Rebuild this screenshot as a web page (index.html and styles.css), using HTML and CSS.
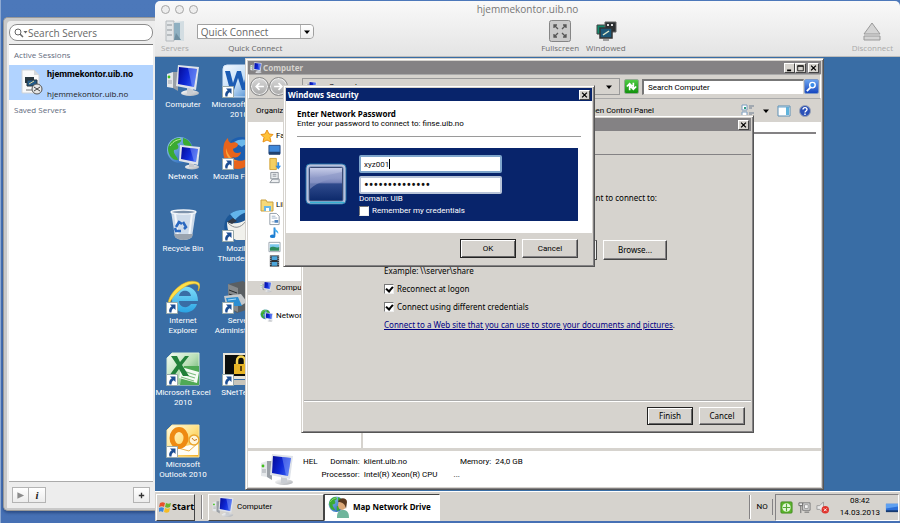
FILE: index.html
```html
<!DOCTYPE html>
<html lang="en">
<head>
<meta charset="utf-8">
<title>hjemmekontor.uib.no</title>
<link rel="stylesheet" href="styles.css">
</head>
<body>
<svg class="defs" aria-hidden="true">
  <defs>
    <linearGradient id="screen" x1="0" y1=".3" x2="1" y2=".7"><stop offset="0" stop-color="#060fa0"/><stop offset=".5" stop-color="#0f2ad8"/><stop offset="1" stop-color="#3a62f4"/></linearGradient>
    <linearGradient id="globe" x1="0" y1="0" x2="1" y2="1"><stop offset="0" stop-color="#9fd4f4"/><stop offset="1" stop-color="#1454b0"/></linearGradient>
    <linearGradient id="silver" x1="0" y1="0" x2="1" y2="1"><stop offset="0" stop-color="#fff"/><stop offset="1" stop-color="#a9adb3"/></linearGradient>
    <linearGradient id="excel" x1="0" y1="0" x2="1" y2="1"><stop offset="0" stop-color="#f6fcf4"/><stop offset=".5" stop-color="#b9dfb6"/><stop offset="1" stop-color="#3f9c4c"/></linearGradient>
    <linearGradient id="outlook" x1="0" y1="0" x2="1" y2="1"><stop offset="0" stop-color="#fffbe4"/><stop offset=".5" stop-color="#ffe184"/><stop offset="1" stop-color="#f2a91c"/></linearGradient>
    <linearGradient id="word" x1="0" y1="0" x2="1" y2="1"><stop offset="0" stop-color="#f4f9ff"/><stop offset=".5" stop-color="#c4def7"/><stop offset="1" stop-color="#2f78c8"/></linearGradient>
    <linearGradient id="ie" x1="0" y1="0" x2="0" y2="1"><stop offset="0" stop-color="#7fdcf8"/><stop offset="1" stop-color="#2aa4e4"/></linearGradient>
    <linearGradient id="tile" x1="0" y1="0" x2="0" y2="1"><stop offset="0" stop-color="#c9cfea"/><stop offset=".45" stop-color="#7784ba"/><stop offset=".5" stop-color="#2f4a8c"/><stop offset="1" stop-color="#0d2a6c"/></linearGradient>
    <symbol id="i-computer" viewBox="0 0 34 34">
      <path d="M1 10l6-2v16l-6-1z" fill="#e4e7ea"/><path d="M7 8l5 0v19l-5-3z" fill="#9aa0a7"/><circle cx="3" cy="13" r="1.400" fill="#42c01c"/><path d="M2 17h4M2 19h4" stroke="#a2a7ad"/>
      <ellipse cx="24" cy="29" rx="9" ry="3" fill="url(#silver)"/><path d="M21 24l6 1v5h-6z" fill="#c9cdd3"/>
      <path d="M12 1l21 2-3 23-20-4z" fill="#dfe3ea"/><path d="M13 3l18 2-3 18-16-3z" fill="url(#screen)"/><path d="M22 4l9 1-3 18-2-.500z" fill="#9db6ff" opacity=".4"/>
    </symbol>
    <symbol id="i-globe" viewBox="0 0 34 34">
      <circle cx="14" cy="14" r="13" fill="url(#globe)"/><path d="M2 13c0-6 6-12 12-11 3 2 0 5-3 6 3 3 1 6-3 6-1 4 3 6 4 10-5 1-10-5-10-11zM17 2c5 1 8 5 9 9-4 1-8-1-9-4zM15 17c5-1 7 2 5 5-1 2-4 4-5 3z" fill="#3aaa32"/><path d="M4 10c4-6 8-6 11-7" stroke="#c4f29a" fill="none"/>
    </symbol>
    <symbol id="i-network" viewBox="0 0 34 34">
      <use href="#i-globe" width="34" height="34"/><ellipse cx="26" cy="31" rx="7" ry="2.500" fill="url(#silver)"/><path d="M23 27h5v4h-5z" fill="#c3c7cd"/><path d="M14 9l20 2-2 18-19-4z" fill="#dfe3ea"/><path d="M16 11l16 2-2 13-15-3z" fill="url(#screen)"/><path d="M24 12l8 1-2 13-2-.500z" fill="#9db6ff" opacity=".4"/>
    </symbol>
    <symbol id="i-arrow" viewBox="0 0 12 12"><path d="M.500.500h11v11H.500z" fill="#fff" stroke="#9aa"/><path d="M4 2.500h5.500V8L7.700 6.200C6 7.300 5.500 8.500 5.500 10.500H3.500C2.500 8 3.500 5.800 5.700 4.200z" fill="#1d4f94"/></symbol>
    <symbol id="i-bin" viewBox="0 0 34 34">
      <path d="M5 3h25l-4 26c-4 4-13 4-17 0z" fill="#dbe5f0" opacity=".92"/><path d="M9 5l3 24M26 5l-3 24" stroke="#fff" opacity=".8" stroke-width="2"/><path d="M8 26h19l-1 3c-4 4-13 4-17 0z" fill="#9aa3ae"/><ellipse cx="17.500" cy="4" rx="12.500" ry="2" fill="#7e93ac" stroke="#f2f6fa" stroke-width="1.500"/>
      <path d="M10 19l3-5 3 2M17 14l3 5-2 2M15 23h-5l-1-3" fill="none" stroke="#2a68c0" stroke-width="2.500"/>
    </symbol>
    <symbol id="i-ie" viewBox="0 0 34 34">
      <path d="M32 21H13c0 7 9 8 12 3h6c-4 13-25 11-25-5C6 3 32 1 32 21zM13 16h12c-1-7-11-7-12 0z" fill="url(#ie)"/><path d="M3 26C-1 17 17-3 31 2c4 1 3 6 1 9 1-4 1-6-2-7C20 2 4 17 3 26z" fill="#ffe04a" stroke="#e8b020" stroke-width=".600"/>
    </symbol>
    <symbol id="i-excel" viewBox="0 0 34 34">
      <path d="M6 1h27v32H1V6z" fill="url(#excel)" stroke="#d7ecd5"/><path d="M18 14h15v19H14z" fill="#4fa955"/><path d="M15 15l18 5-2 11-18-5z" fill="#f5fbf4"/><path d="M17 19l13 4M16 22l13 4M15 25l13 4" stroke="#7dbd80" stroke-width="1.300"/><path d="M5 4h6l3 6 5-6h4l-7 9 7 11h-6l-4-7-5 7H3l8-11z" fill="#22803a"/>
    </symbol>
    <symbol id="i-outlook" viewBox="0 0 34 34">
      <path d="M6 1h27v32H1V6z" fill="url(#outlook)" stroke="#fbe6a0"/><path d="M12 24l20-5v12H12z" fill="#fffdf5"/><path d="M12 24l11 3 9-8" fill="none" stroke="#e9b04a"/><ellipse cx="13" cy="14" rx="7" ry="8.500" fill="none" stroke="#ee8a12" stroke-width="5"/><circle cx="28" cy="16" r="5" fill="#fff4d8" stroke="#eaa52c" stroke-width="1.500"/><path d="M26 14l2 2.500 3-1" fill="none" stroke="#c8741a"/>
    </symbol>
    <symbol id="i-word" viewBox="0 0 34 34">
      <rect x="1" y="1" width="33" height="32" rx="4" fill="url(#word)" stroke="#d8e8fa"/><path d="M3 7h5l3 12 4-12h4l3 12 3-12h5l-6 19h-4l-4-12-4 12H8z" fill="#1c5cb4"/>
    </symbol>
    <symbol id="i-firefox" viewBox="0 0 34 34">
      <circle cx="19" cy="15" r="14" fill="#1d5fb0"/><path d="M12 6c6-4 14-3 17 1-4 2-7 1-9 4z" fill="#6cb8ea"/><path d="M2 8c1-3 2-4 4-6 0 3 1 4 3 5 3-1 5-1 7 1 0 3-3 4-5 5 0 4 4 5 8 3-1 6-7 6-9 5 5 6 14 5 18-3 3 9-5 15-12 15C5 33-1 22 2 8z" fill="#e8641b"/><path d="M4 12c2 8 6 12 12 13-8 1-13-5-12-13z" fill="#f8a43c"/>
    </symbol>
    <symbol id="i-thunderbird" viewBox="0 0 34 34">
      <path d="M3 24C-1 8 12-1 30 2l4 4v24H12z" fill="#1c5796"/><path d="M8 6c7-5 15-5 22-3-8 1-13 4-17 9z" fill="#63b4ea"/><path d="M5 14c7 2 13 2 20-3 5 3 9 8 9 13v8H14c-6-3-9-9-9-18z" fill="#f1f1ec"/><path d="M6 15c6 6 12 6 18-2" fill="none" stroke="#8a8d90"/><path d="M5 14l6-4 4 3-5 3z" fill="#333b48"/>
    </symbol>
    <symbol id="i-server" viewBox="0 0 34 34">
      <path d="M6 4l15-3 6 4v24l-12 4-8-5z" fill="#5a5f63"/><path d="M6 4l10 4v24l-9-4z" fill="#85898c"/><path d="M7 10l8 3M7 14l8 3" stroke="#25292c"/><path d="M2 16l17-2 6 8-5 3H4z" fill="#c5c9cc"/><path d="M4 18l12-1 4 9H6z" fill="#2c8ed2"/><path d="M6 20l8-1" stroke="#a8dcff"/>
    </symbol>
    <symbol id="i-snet" viewBox="0 0 34 34">
      <path d="M1 1h33v26H1z" fill="#e8e4d8"/><path d="M3 3h31v21H3z" fill="#0b0d0b"/><path d="M4 28h30v5H4z" fill="#c9c5ba"/><path d="M15 12V9c0-6 8-6 8 0v3" fill="none" stroke="#f4d250" stroke-width="2.500"/><path d="M12 12h15v10H12z" fill="#e8b526"/><path d="M19 14v5" stroke="#5f430a" stroke-width="2"/>
    </symbol>
    <symbol id="i-x" viewBox="0 0 10 10"><path d="M2 2l6 6M8 2l-6 6" stroke="#000" stroke-width="1.600"/></symbol>
    <symbol id="i-caret" viewBox="0 0 8 8"><path d="M1 2.500h6L4 6z"/></symbol>
  </defs>
</svg>

<aside class="drawer" aria-label="Servers">
  <label class="find">
    <svg viewBox="0 0 14 10" aria-hidden="true"><circle cx="4" cy="4" r="3" fill="none" stroke="#666"/><path d="M6 6l3 3" stroke="#666" stroke-width="1.500"/><path d="M9.500 3h4l-2 2.500z" fill="#666"/></svg>
    <input type="search" placeholder="Search Servers" aria-label="Search Servers">
  </label>
  <div class="sessions">
    <h2>Active Sessions</h2>
    <a class="session" href="#session">
      <svg viewBox="0 0 22 26" aria-hidden="true"><path d="M1 1h12l5 5v18H1z" fill="#fafafa" stroke="#cfd3d8"/><path d="M13 1v5h5z" fill="#d4d8dc"/><path d="M4 8h9v6H4z" fill="#2a3840"/><path d="M6 11h10v6H6z" fill="#245a86" stroke="#26323a"/><path d="M8 15l5-3" stroke="#e6d9a0"/><path d="M5 21h6" stroke="#777"/><circle cx="16" cy="20" r="5" fill="#e6e6e6" stroke="#555"/><path d="M13 18l3 2-3 2M19 18l-3 2 3 2" fill="none" stroke="#444"/></svg>
      <span><b>hjemmekontor.uib.no</b><span>hjemmekontor.uib.no</span></span>
    </a>
    <h2>Saved Servers</h2>
  </div>
  <footer class="drawer-bar">
    <button type="button" aria-label="Connect"><svg viewBox="0 0 10 10" aria-hidden="true"><path d="M1.500 1.500L9 5 1.500 8.500z" fill="#8b8b8b"/></svg></button>
    <button type="button" class="info" aria-label="Info">i</button>
    <button type="button" class="add" aria-label="Add"><svg viewBox="0 0 10 10" aria-hidden="true"><path d="M5 2v6M2 5h6" stroke="#333" stroke-width="1.500"/></svg></button>
  </footer>
</aside>

<main class="client">
  <header class="chrome">
    <div class="titlebar">
      <div class="lights"><i></i><i></i><i></i></div>
      <h1>hjemmekontor.uib.no</h1>
    </div>
    <div class="toolbar">
      <button type="button" class="tool dim"><svg viewBox="0 0 22 22" aria-hidden="true"><path d="M2 1h8v20H2z" fill="#e3e6e8" stroke="#b4b9bd"/><path d="M3 5h5M3 10h5M3 15h5" stroke="#8d9499"/><path d="M10 2l10-1v20l-10-1z" fill="#d3dde2"/><path d="M10 3l6 0v17l-6 0z" fill="#8fb0c1"/><path d="M12 13l5 7h-7z" fill="#6f8fa1"/></svg>Servers</button>
      <div class="quick">
        <div class="combo"><input type="text" value="Quick Connect" aria-label="Quick Connect"><button type="button" aria-label="Show list"><svg viewBox="0 0 8 8" aria-hidden="true"><use href="#i-caret"/></svg></button></div>
        <span>Quick Connect</span>
      </div>
      <div class="modes">
        <button type="button" class="tool"><svg viewBox="0 0 22 22" aria-hidden="true"><rect x=".500" y=".500" width="21" height="21" rx="2" fill="#cacaca" stroke="#858585"/><path d="M9 9L5 5M5 8V5h3M13 9l4-4M14 5h3v3M9 13l-4 4M5 14v3h3M13 13l4 4M17 14v3h-3" fill="none" stroke="#555" stroke-width="1.300"/></svg>Fullscreen</button>
        <button type="button" class="tool"><svg viewBox="0 0 22 22" aria-hidden="true"><path d="M2 5h10v9H2z" fill="#128a6c" stroke="#444"/><path d="M10 2h11v10H10z" fill="#2b2f31" stroke="#666"/><path d="M12 4h2v2h-2zM16 4h2v2h-2z" fill="#ddd"/><path d="M5 8h12v10H5z" fill="#1c5878" stroke="#333" stroke-width="1.500"/><path d="M8 15l6-4" stroke="#dbe6c8" stroke-width="1.500"/><path d="M8 20h6" stroke="#555"/></svg>Windowed</button>
      </div>
      <button type="button" class="tool dim"><svg viewBox="0 0 22 22" aria-hidden="true"><path d="M11 3l8 11H3zM3 16h16v4H3z" fill="#d4d4d4" stroke="#999"/></svg>Disconnect</button>
    </div>
  </header>

  <section class="remote">
    <ul class="icons">
      <li><svg><use href="#i-computer"/></svg>Computer</li>
      <li><svg><use href="#i-network"/></svg>Network</li>
      <li><svg><use href="#i-bin"/></svg>Recycle Bin</li>
      <li><svg><use href="#i-ie"/><use href="#i-arrow" y="22" width="12" height="12"/></svg>Internet<br>Explorer</li>
      <li><svg><use href="#i-excel"/><use href="#i-arrow" y="22" width="12" height="12"/></svg>Microsoft Excel<br>2010</li>
      <li><svg><use href="#i-outlook"/><use href="#i-arrow" y="22" width="12" height="12"/></svg>Microsoft<br>Outlook 2010</li>
      <li><svg><use href="#i-word"/><use href="#i-arrow" y="22" width="12" height="12"/></svg>Microsoft Word<br>2010</li>
      <li><svg><use href="#i-firefox"/><use href="#i-arrow" y="22" width="12" height="12"/></svg>Mozilla Firefox</li>
      <li><svg><use href="#i-thunderbird"/><use href="#i-arrow" y="22" width="12" height="12"/></svg>Mozilla<br>Thunderbird</li>
      <li><svg><use href="#i-server"/><use href="#i-arrow" y="22" width="12" height="12"/></svg>Server<br>Administrator</li>
      <li><svg><use href="#i-snet"/><use href="#i-arrow" y="22" width="12" height="12"/></svg>SNetTerm</li>
    </ul>

    <section class="win explorer" aria-label="Computer">
      <header class="bar"><svg class="s12"><use href="#i-computer" width="12" height="12"/></svg><h2>Computer</h2>
        <button type="button" aria-label="Minimize"><svg viewBox="0 0 10 10"><path d="M2 8h5" stroke="#000" stroke-width="2"/></svg></button>
        <button type="button" aria-label="Maximize"><svg viewBox="0 0 10 10"><path d="M1.500 2h7v6.500h-7zM1.500 3h7" fill="none" stroke="#000"/></svg></button>
        <button type="button" class="close" aria-label="Close"><svg viewBox="0 0 10 10"><use href="#i-x"/></svg></button>
      </header>
      <div class="address">
        <button type="button" class="round" aria-label="Back"><svg viewBox="0 0 10 10"><path d="M9 5H2M5 2L2 5l3 3" fill="none" stroke="#fff" stroke-width="1.500"/></svg></button>
        <button type="button" class="round" aria-label="Forward"><svg viewBox="0 0 10 10"><path d="M1 5h7M5 2l3 3-3 3" fill="none" stroke="#fff" stroke-width="1.500"/></svg></button>
        <div class="path"><svg class="s12"><use href="#i-computer" width="12" height="12"/></svg><span>Computer</span><svg class="s8"><use href="#i-caret" width="8" height="8"/></svg></div>
        <button type="button" class="go" aria-label="Refresh"><svg viewBox="0 0 14 14"><path d="M5 11V5M2 7l3-3 3 3M9 3v6M6 7l3 3 3-3" fill="none" stroke="#fff" stroke-width="1.800"/></svg></button>
        <input type="search" placeholder="Search Computer" aria-label="Search Computer">
        <button type="button" class="go blue" aria-label="Search"><svg viewBox="0 0 14 14"><circle cx="8" cy="5.500" r="3" fill="#3a8be8" stroke="#fff" stroke-width="1.500"/><path d="M6 8l-4 4" stroke="#fff" stroke-width="2"/></svg></button>
      </div>
      <div class="commands">
        <span>Organize</span><span class="panel">Open Control Panel</span>
        <svg class="s14" viewBox="0 0 14 14"><path d="M1 1h5v5H1zM1 8h5v5H1z" fill="#fff" stroke="#7d9ec0"/><path d="M3 3h2v2H3z" fill="#2f9c84"/><path d="M8 2h5M8 4h3M8 9h5M8 11h3" stroke="#6e7f92"/></svg>
        <svg class="s8"><use href="#i-caret" width="8" height="8"/></svg>
        <svg class="s14" viewBox="0 0 14 14"><path d="M1 2h12v10H1z" fill="#fff" stroke="#5d8fb4"/><path d="M9 3h3v8H9z" fill="#5fb4dc"/><path d="M1 3h12" stroke="#6fa6cc"/></svg>
        <svg class="s14" viewBox="0 0 14 14"><circle cx="7" cy="7" r="5.500" fill="#2a50b8" stroke="#9aa3b4"/><path d="M5 5.500c0-2.500 4-2.500 4 0C9 7 7 7 7 8.500M7 9.500V11" fill="none" stroke="#fff" stroke-width="1.400"/></svg>
      </div>
      <div class="folders">
        <nav class="tree">
          <p><svg class="s14" viewBox="0 0 14 14"><path d="M7 1l2 4 4 .500-3 3 1 4.500-4-2-4 2 1-4.500-3-3L5 5z" fill="#ffc23a" stroke="#e89018"/></svg>Favorites</p>
          <svg class="leaf" viewBox="0 0 14 14"><path d="M1 2h12v9H1z" fill="#3f88da" stroke="#2c4f86"/><path d="M1 9h12v3H1z" fill="#20416f"/></svg>
          <svg class="leaf" viewBox="0 0 14 14"><path d="M2 1h7v12H2z" fill="#f3cf62" stroke="#d0a030"/><path d="M10 5v4H8l3 4 3-4h-2V5z" fill="#2f8be0"/></svg>
          <svg class="leaf" viewBox="0 0 14 14"><path d="M3 1h8v7H3zM5 8l-3 4h10V8z" fill="#eef0f2" stroke="#8b9299"/><path d="M5 3h4M5 5h4" stroke="#8b9299"/></svg>
          <p class="branch"><svg class="s14" viewBox="0 0 14 14"><path d="M1 2h5l1 2h6v9H1z" fill="#f6d978" stroke="#c9a040"/><path d="M4 13V8h7v5" fill="#68b6e4"/><path d="M6 13v-3h3v3" fill="#fff"/></svg>Libraries</p>
          <svg class="leaf" viewBox="0 0 14 14"><path d="M2 1h7l3 3v9H2z" fill="#fff" stroke="#8e98a4"/><path d="M4 4h4M4 6h6M4 10h3" stroke="#9db0c6"/><path d="M7 8h4v3H7z" fill="#4a83c0"/></svg>
          <svg class="leaf" viewBox="0 0 14 14"><path d="M7 1v9" stroke="#1c7ed2" stroke-width="2"/><path d="M7 1c1 3 5 3 4 7-1-2-2-2-4-3z" fill="#4ab0ee"/><ellipse cx="5" cy="10.500" rx="3" ry="2" fill="#1c7ed2"/></svg>
          <svg class="leaf" viewBox="0 0 14 14"><path d="M1 2h12v10H1z" fill="#fff" stroke="#9aa4ae"/><path d="M2 4h10v4H2z" fill="#7cc8ec"/><path d="M2 8c4-3 6 1 10-1v4H2z" fill="#2c8a5c"/></svg>
          <svg class="leaf" viewBox="0 0 14 14"><path d="M2 1h10v12H2z" fill="#2b3138"/><path d="M4 2h6v4H4zM4 8h6v4H4z" fill="#4ba6dc"/><path d="M3 2v10M11 2v10" stroke="#ddd" stroke-dasharray="1 1"/></svg>
          <p class="here"><svg class="s14"><use href="#i-computer" width="12" height="12"/></svg>Computer</p>
          <p class="net"><svg class="s14"><use href="#i-network" width="13" height="13"/></svg>Network</p>
        </nav>
        <div class="list"><hr></div>
      </div>
      <footer class="details">
        <svg class="s34"><use href="#i-computer"/></svg>
        <b>HEL</b>
        <dl><dt>Domain:</dt><dd>klient.uib.no</dd><dt>Processor:</dt><dd>Intel(R) Xeon(R) CPU<span class="more">...</span></dd></dl>
        <dl><dt>Memory:</dt><dd>24,0 GB</dd></dl>
      </footer>
    </section>

    <section class="win mapdrive" aria-label="Map Network Drive">
      <header class="bar"><button type="button" class="close" aria-label="Close"><svg viewBox="0 0 10 10"><use href="#i-x"/></svg></button></header>
      <div class="wizard-head"></div>
      <form class="wizard">
        <p class="intro">want to connect to:</p>
        <div class="browse"><select aria-label="Folder"><option></option></select><button type="button" class="btn">Browse...</button></div>
        <p>Example: \\server\share</p>
        <label><input type="checkbox" checked>Reconnect at logon</label>
        <label><input type="checkbox" checked>Connect using different credentials</label>
        <p class="web"><a href="#web">Connect to a Web site that you can use to store your documents and pictures</a>.</p>
      </form>
      <footer class="wizard-foot"><button type="button" class="btn default">Finish</button><button type="button" class="btn">Cancel</button></footer>
    </section>

    <section class="win security" aria-label="Windows Security">
      <header class="bar active"><h2>Windows Security</h2><button type="button" class="close" aria-label="Close"><svg viewBox="0 0 10 10"><use href="#i-x"/></svg></button></header>
      <div class="ask">
        <h3>Enter Network Password</h3>
        <p>Enter your password to connect to: finse.uib.no</p>
        <hr>
        <form class="login">
          <svg viewBox="0 0 42 42" aria-hidden="true"><rect x="1" y="1" width="40" height="40" rx="4" fill="#5c7fb4" stroke="#1c6fa6"/><rect x="2.500" y="2.500" width="37" height="37" rx="3" fill="none" stroke="#b9c2da" stroke-width="2"/><rect x="4.500" y="4.500" width="33" height="33" rx="1" fill="url(#tile)" stroke="#3c4a72"/><path d="M5 22v-6L37 9v5C25 16 14 18 5 26z" fill="#8d99c8" opacity=".6"/><path d="M5 39.500h34" stroke="#35b0d0" stroke-width="1.500"/></svg>
          <div>
            <input type="text" value="xyz001" aria-label="User name"><span class="cursor"></span>
            <input type="password" value="abcdefghijklmn" aria-label="Password">
            <p>Domain: UIB</p>
            <label><input type="checkbox">Remember my credentials</label>
          </div>
        </form>
      </div>
      <footer class="answer"><button type="button" class="btn default">OK</button><button type="button" class="btn">Cancel</button></footer>
    </section>
  </section>

  <footer class="taskbar">
    <button type="button" class="start"><svg viewBox="0 0 12 12" aria-hidden="true"><path d="M1 2c2-1 3-1 5 0L5 6C4 5 2 5 0 6z" fill="#e8502a"/><path d="M7 2c2 1 3 1 5 0l-1 4c-2 1-3 1-5 0z" fill="#6cb52d"/><path d="M0 7c2-1 3-1 5 0l-1 4c-2-1-3-1-4 0z" fill="#3c86dc"/><path d="M6 7c2 1 3 1 5 0l-1 4c-2 1-3 1-5 0z" fill="#f6bc24"/></svg>Start</button>
    <span class="grip"></span>
    <button type="button" class="task"><svg><use href="#i-computer" width="22" height="22"/></svg>Computer</button>
    <button type="button" class="task on"><svg viewBox="0 0 22 22"><use href="#i-globe" width="20" height="20"/><path d="M9 21c0-6 3-7 6-7s6 1 6 8H9z" fill="#6fb59c"/><ellipse cx="14" cy="9" rx="4" ry="5" fill="#dca878"/><path d="M10 6c1-5 9-5 9 0l-1 7c-1-5-3-7-8-7z" fill="#59381e"/></svg>Map Network Drive</button>
    <span class="grip end"></span>
    <span class="lang">NO</span>
    <div class="tray">
      <svg viewBox="0 0 14 14"><rect x="1" y="1" width="12" height="12" rx="1" fill="#5cb52c" stroke="#438a22"/><circle cx="7" cy="7" r="4.500" fill="#e4f6da"/><path d="M7 3v8M3 7h8" stroke="#57a834" stroke-width="1.200"/></svg>
      <svg viewBox="0 0 14 14"><path d="M5 2h8v8H5z" fill="#d8d8d8" stroke="#777"/><path d="M7 4h4v4H7z" fill="#f7f7f7" stroke="#999"/><path d="M1 2h4v3H1zM3 5v8M7 12h5" fill="#eee" stroke="#666"/></svg>
      <svg viewBox="0 0 14 14"><path d="M1 5h3l4-4v12l-4-4H1z" fill="#e9e9e9" stroke="#999"/><circle cx="10" cy="9.500" r="4" fill="#e0332c"/><path d="M8.500 8l3 3M11.500 8l-3 3" stroke="#fff"/></svg>
      <time>08:42<br>14.03.2013</time>
      <svg viewBox="0 0 14 14"><path d="M1 3h13v8H1z" fill="#2c6fd8"/><path d="M1 3h13v3L1 8z" fill="#5fa0f0"/><path d="M1 10h13v2H1z" fill="#173a70"/></svg>
    </div>
  </footer>
</main>
</body>
</html>
```
FILE: styles.css
```css
:root {
  --face: #d6d3ce;
  --navy: #08246b;
  --shade: #848284;
  --ui: Roboto, "Noto Sans", sans-serif;
  --wide: "Noto Sans", "Open Sans", sans-serif;
  --mac: "Open Sans", "Noto Sans", sans-serif;
}
* { box-sizing: border-box; margin: 0; padding: 0; }
body {
  display: flex;
  height: 100vh;
  overflow: hidden;
  background: linear-gradient(#4c78ba, #4670b4);
  border-left: 1px solid #8ea9d2;
  font: 8px/10px var(--ui);
  color: #000;
}
button, input, select { font: inherit; color: inherit; }
h1, h2, h3 { font: inherit; }
ul { list-style: none; }
svg { display: block; flex: none; }
.defs { position: absolute; width: 0; height: 0; }

/* server drawer */
.drawer {
  display: flex;
  flex-direction: column;
  width: 152px;
  margin: 17px 0 12px 2px;
  padding: 6px 2px 7px 5px;
  background: #ededed;
  border: 1px solid #999;
  border-right: 0;
  border-radius: 5px 0 0 5px;
  box-shadow: inset 3px 3px 0 #c9c9c9, inset 0 -2px 0 #c9c9c9, 0 2px 3px #2c4d86;
  font-family: var(--mac);
}
.find {
  display: flex;
  align-items: center;
  height: 17px;
  padding: 0 4px;
  border: 1px solid #8d8d8d;
  border-radius: 8px;
  background: #fff;
}
.find svg { width: 14px; height: 10px; }
.find input {
  width: 100%;
  min-width: 0;
  border: 0;
  outline: 0;
  background: none;
  font-size: 10px;
}
.find input::placeholder { color: #666; }
.sessions {
  flex: 1;
  margin-top: 3px;
  background: #fff;
  border-top: 1px solid #777;
  border-bottom: 1px solid #aaa;
}
.sessions h2 { padding: 0 5px; line-height: 20px; color: #626a7c; }
.session {
  display: flex;
  gap: 4px;
  height: 35px;
  padding: 4px 0 0 12px;
  background: #b1d3ff;
  color: #222;
  text-decoration: none;
}
.session > svg { width: 22px; height: 26px; }
.session b { display: block; margin-bottom: 10px; font-family: var(--ui); font-size: 9px; color: #000; }
.drawer-bar { display: flex; padding: 5px 3px 0; }
.drawer-bar button {
  display: grid;
  place-items: center;
  width: 17px;
  height: 16px;
  border: 1px solid #b4b4b4;
  background: linear-gradient(#fff, #ececec);
}
.drawer-bar button + button { border-left: 0; }
.drawer-bar svg { width: 9px; height: 9px; }
.drawer-bar .info { font: italic bold 11px "Liberation Serif", serif; color: #222; }
.drawer-bar button.add { margin-left: auto; border-left: 1px solid #b4b4b4; }

/* client window */
.client {
  flex: 1;
  display: flex;
  flex-direction: column;
  min-width: 0;
  margin: 1px 0 2px;
  border-radius: 5px 5px 0 0;
  overflow: hidden;
}
.chrome {
  height: 56px;
  background: linear-gradient(#f9f9f9, #e4e4e4);
  border-bottom: 1px solid #bdbdbd;
  font-family: var(--mac);
}
.titlebar { display: grid; grid-template-columns: 1fr auto 1fr; height: 16px; align-items: center; }
.titlebar h1 { font-size: 10px; color: #777; }
.lights { display: flex; gap: 5px; padding-left: 6px; }
.lights i { width: 9px; height: 9px; border: 1px solid #a5a5a5; border-radius: 50%; background: #eee; }
.toolbar { display: flex; align-items: flex-start; padding: 3px 7px 0 6px; }
.tool {
  display: flex;
  flex-direction: column;
  align-items: center;
  gap: 1px;
  border: 0;
  background: none;
  line-height: 10px;
  color: #707070;
}
.tool svg { width: 22px; height: 22px; }
.tool.dim { color: #aaa; }
.quick { margin-left: 8px; padding-top: 4px; text-align: center; color: #666; }
.combo { display: flex; width: 117px; height: 15px; margin-bottom: 4px; border: 1px solid #a0a0a0; border-radius: 0 4px 4px 0; background: #fff; }
.combo input { flex: 1; min-width: 0; padding-left: 3px; border: 0; outline: 0; background: none; font-size: 10px; color: #666; }
.combo button { width: 13px; border: 0; border-left: 1px solid #b5b5b5; border-radius: 0 4px 4px 0; background: linear-gradient(#fff, #eee); }
.combo button svg { width: 8px; height: 8px; margin: auto; }
.modes { flex: 1; display: flex; justify-content: flex-end; gap: 7px; margin-right: 226px; }

/* remote desktop */
.remote { position: relative; flex: 1; background: #396da5; overflow: hidden; }
.icons {
  display: grid;
  grid-auto-flow: column;
  grid-template-rows: repeat(6, 72px);
  grid-auto-columns: 56px;
  padding-top: 7px;
}
.icons li {
  display: flex;
  flex-direction: column;
  align-items: center;
  text-align: center;
  white-space: nowrap;
  color: #fff;
}
.icons svg { width: 34px; height: 34px; margin-bottom: 2px; }

.win {
  position: absolute;
  display: flex;
  flex-direction: column;
  background: var(--face);
  border: 1px solid;
  border-color: #d6d3ce #555 #555 #d6d3ce;
  box-shadow: inset 1px 1px 0 #fff, inset -1px -1px 0 var(--shade);
  padding: 2px;
}
.bar {
  display: flex;
  align-items: center;
  height: 13px;
  padding: 0 2px;
  background: var(--shade);
  color: var(--face);
}
.bar.active { background: var(--navy); color: #fff; }
.bar h2 { flex: 1; font-family: var(--wide); font-weight: bold; }
.bar button {
  width: 11px;
  height: 10px;
  border: 1px solid;
  border-color: #fff #444 #444 #fff;
  background: var(--face);
}
.bar .close { margin-left: 2px; }
.bar button svg { width: 9px; height: 8px; }
.s8 { width: 8px; height: 8px; }
.s12 { width: 12px; height: 12px; }
.s14 { width: 14px; height: 14px; }
.s34 { width: 34px; height: 34px; }

.explorer { inset: 1px 76px 1px 90px; }
.explorer .bar { flex: none; }
.explorer .bar h2 { padding-left: 1px; }
.address { display: flex; align-items: center; height: 25px; padding: 0 1px; border: 1px solid #fff; border-top-color: #aaa; border-bottom-color: #aaa; }
.round { width: 19px; height: 19px; border: 1px solid #8a8a8a; border-radius: 50%; background: linear-gradient(#d8d8d8, #aaa); box-shadow: inset 0 0 0 1px #eee; }
.round svg { width: 11px; height: 11px; margin: auto; }
.path { flex: 1; display: flex; align-items: center; gap: 12px; height: 17px; margin-left: 14px; padding: 0 6px 0 2px; border: 1px solid #999; }
.path .s8 { margin-left: auto; }
.go { display: grid; place-items: center; width: 15px; height: 15px; margin: 0 3px 0 4px; border: 1px solid #8fa88f; border-radius: 2px; background: linear-gradient(#4ecb43, #12920d); }
.go.blue { margin: 0; border-color: #7c98c8; background: linear-gradient(#6aa2ee, #1546c0); }
.go svg { width: 13px; height: 13px; }
.address input { width: 162px; height: 16px; padding: 0 4px; border: 1px solid var(--face); border-top: 2px solid #777; border-left: 2px solid #777; background: #fff; }
.address input::placeholder { color: #000; }
.commands { display: flex; align-items: center; gap: 7px; height: 23px; padding: 0 9px 0 8px; }
.commands .panel { margin: 0 auto 0 291px; }
.folders { flex: 1; display: flex; background: #fff; }
.tree { width: 115px; padding-top: 7px; border-right: 2px solid var(--face); }
.tree p { display: flex; align-items: center; gap: 2px; height: 14px; padding-left: 12px; }
.tree .leaf { width: 13px; height: 14px; margin-left: 20px; }
.tree .branch { margin-top: 13px; }
.tree .here { margin: 13px 0 14px; background: var(--face); }
.list { flex: 1; padding: 10px 5px; }
.list hr { border: 0; height: 2px; background: var(--shade); }
.details { display: flex; height: 39px; padding: 4px 0 0 12px; background: #fff; border-top: 3px solid var(--face); }
.details svg { margin-top: -2px; }
.details b { margin: 0 4px 0 9px; font-weight: normal; line-height: 13px; }
.details dl { display: grid; grid-template-columns: auto auto; align-content: start; column-gap: 4px; line-height: 13px; }
.details dt { text-align: right; }
.more { margin-left: 16px; }

.btn {
  min-width: 46px;
  height: 18px;
  border: 1px solid;
  border-color: #fff #444 #444 #fff;
  box-shadow: inset -1px -1px 0 var(--shade);
  background: var(--face);
}
.btn.default { border-color: #222; box-shadow: inset 1px 1px 0 #fff, inset -1px -1px 0 #666; }
a { color: #000084; }
label { display: flex; align-items: center; }
[type="checkbox"] {
  appearance: none;
  width: 10px;
  height: 10px;
  margin-right: 3px;
  border: 1px solid;
  border-color: #777 #eee #eee #777;
  background: #fff;
}
[type="checkbox"]:checked::after { content: ""; display: block; width: 3px; height: 5px; margin: 0 auto; border: solid #000; border-width: 0 2px 2px 0; transform: rotate(40deg); }

.mapdrive { inset: 58px 146px 58px 146px; font-family: var(--wide); }
.mapdrive .bar { justify-content: flex-end; }
.wizard-head { height: 24px; border-bottom: 1px solid var(--shade); }
.wizard { flex: 1; display: flex; flex-direction: column; gap: 8px; padding: 38px 84px 0 80px; border-bottom: 1px solid #aaa; box-shadow: 0 1px 0 #fff; }
.wizard .intro { text-align: right; padding-right: 10px; }
.web { white-space: nowrap; }
.browse { display: flex; gap: 6px; margin: 29px 0 -2px; }
.browse select { flex: 1; border: 1px solid; border-color: #777 #444 #444 #777; }
.browse .btn { width: 64px; height: 20px; }
.wizard-foot { display: flex; justify-content: flex-end; gap: 6px; padding: 6px 6px 5px; }

.security { top: 28px; right: 305px; left: 128px; }
.security .ask { padding: 8px 11px 12px; background: #fff; }
.security h3 { font-family: var(--wide); font-weight: bold; }
.security hr { margin: 7px 0 11px; border: 0; border-top: 1px solid #9a9a9a; }
.login { display: flex; gap: 12px; height: 73px; margin: 0 3px; padding: 7px 5px; background: var(--navy); color: #fff; }
.login > svg { width: 42px; height: 42px; margin-top: 8px; }
.login > div { position: relative; }
.login [type="text"], .login [type="password"] { display: block; width: 143px; height: 18px; padding: 0 3px; border: 2px solid #b8c4d8; border-radius: 2px; outline: 0; background: #fff; color: #111; }
.login [type="text"] { margin-bottom: 3px; border-color: #7fa6cc; }
.login [type="password"] { font-size: 14px; }
.login label { margin-top: 2px; }
.cursor { position: absolute; top: 4px; left: 30px; width: 1px; height: 10px; background: #000; }
.answer { display: flex; justify-content: flex-end; gap: 6px; padding: 6px 14px 6px; }
.answer .btn { width: 56px; height: 19px; }

/* taskbar */
.taskbar { display: flex; align-items: center; height: 30px; padding: 2px 1px 1px; background: var(--face); border-top: 1px solid #fff; }
.start, .task { display: flex; align-items: center; height: 27px; border: 1px solid; border-color: #fff #444 #444 #fff; background: var(--face); }
.start { gap: 1px; width: 39px; padding: 0 2px; font-family: var(--wide); font-weight: bold; font-size: 9px; }
.start svg { width: 12px; height: 12px; }
.grip { width: 2px; height: 24px; margin: 0 5px 0 6px; border-left: 1px solid var(--shade); border-right: 1px solid #fff; }
.grip.end { margin: 0 6px 0 auto; }
.task { gap: 3px; width: 116px; padding: 0 3px; }
.task svg { width: 22px; height: 22px; }
.task.on { border-color: #444 #fff #fff #444; background: #fff; font-family: var(--wide); font-weight: bold; }
.lang { padding-right: 4px; border-right: 1px solid var(--shade); line-height: 16px; }
.tray { display: flex; align-items: center; gap: 5px; height: 27px; margin-left: 2px; padding-left: 4px; border: 1px solid; border-color: var(--shade) #fff #fff var(--shade); }
.tray svg { width: 13px; height: 13px; }
.tray time { margin-left: 6px; text-align: center; line-height: 12px; }
```
